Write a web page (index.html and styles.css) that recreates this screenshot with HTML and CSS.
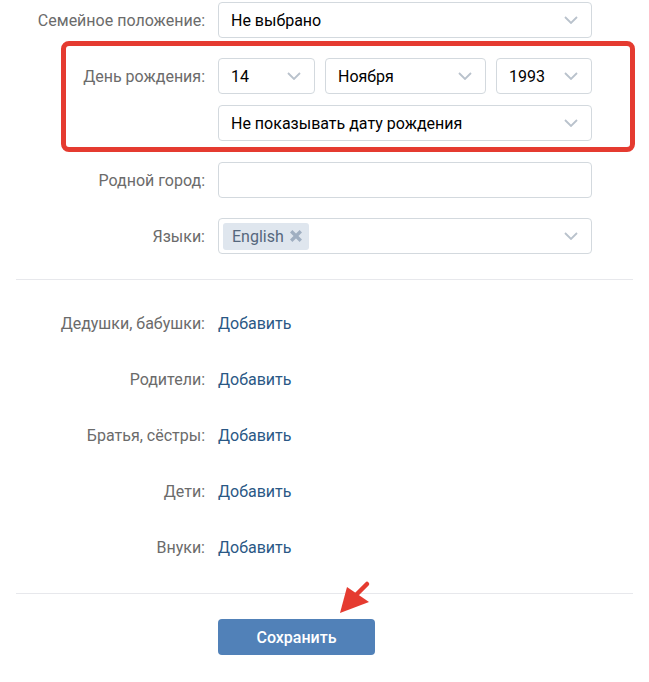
FILE: index.html
```html
<!DOCTYPE html>
<html lang="ru">
<head>
<meta charset="utf-8">
<link rel="stylesheet" href="styles.css">
</head>
<body>
<div class="page">
  <div class="row">
    <div class="label">Семейное положение:</div>
    <div class="field">
      <div class="select wide"><span>Не выбрано</span><svg class="chev" viewBox="0 0 14 8"><path d="M1 1l6 6 6-6"/></svg></div>
    </div>
  </div>

  <div class="bday">
    <div class="row tight">
      <div class="label">День рождения:</div>
      <div class="field split">
        <div class="select day"><span>14</span><svg class="chev" viewBox="0 0 14 8"><path d="M1 1l6 6 6-6"/></svg></div>
        <div class="select month"><span>Ноября</span><svg class="chev" viewBox="0 0 14 8"><path d="M1 1l6 6 6-6"/></svg></div>
        <div class="select year"><span>1993</span><svg class="chev" viewBox="0 0 14 8"><path d="M1 1l6 6 6-6"/></svg></div>
      </div>
    </div>
    <div class="row bday-last">
      <div class="label"></div>
      <div class="field">
        <div class="select wide"><span>Не показывать дату рождения</span><svg class="chev" viewBox="0 0 14 8"><path d="M1 1l6 6 6-6"/></svg></div>
      </div>
    </div>
    <div class="highlight"></div>
  </div>

  <div class="row">
    <div class="label">Родной город:</div>
    <div class="field"><div class="input"></div></div>
  </div>

  <div class="row">
    <div class="label">Языки:</div>
    <div class="field">
      <div class="select wide tags">
        <span class="tag">English<svg class="x" viewBox="0 0 10 10"><path d="M1 1l8 8M9 1l-8 8"/></svg></span>
        <svg class="chev" viewBox="0 0 14 8"><path d="M1 1l6 6 6-6"/></svg>
      </div>
    </div>
  </div>

  <div class="sep"></div>

  <div class="relatives">
    <div class="row"><div class="label">Дедушки, бабушки:</div><div class="field"><a class="link">Добавить</a></div></div>
    <div class="row"><div class="label">Родители:</div><div class="field"><a class="link">Добавить</a></div></div>
    <div class="row"><div class="label">Братья, сёстры:</div><div class="field"><a class="link">Добавить</a></div></div>
    <div class="row"><div class="label">Дети:</div><div class="field"><a class="link">Добавить</a></div></div>
    <div class="row"><div class="label">Внуки:</div><div class="field"><a class="link">Добавить</a></div></div>
  </div>

  <div class="sep sep2"></div>

  <div class="actions">
    <button class="btn">Сохранить</button>
    <svg class="arrow" viewBox="0 0 50 40"><path class="shaft" d="M37 5L24 18"/><path class="head" d="M17 8L39 23L10 34Z"/></svg>
  </div>
</div>
</body>
</html>
```

FILE: styles.css
```css
* { box-sizing: border-box; }
html, body { margin: 0; padding: 0; background: #fff; }
body {
  font-family: Roboto, "Noto Sans", Arial, sans-serif;
  font-size: 16px;
  color: #000;
  width: 649px;
  height: 682px;
  overflow: hidden;
}
.page {
  position: relative;
  padding-top: 2px;
}
.row {
  display: flex;
  align-items: center;
  min-height: 36px;
  margin-bottom: 20px;
}
.row.tight { margin-bottom: 11px; }
.label {
  width: 205px;
  flex: none;
  text-align: right;
  color: #6b6b6b;
}
.field {
  margin-left: 13px;
  width: 374px;
  flex: none;
}
.split {
  display: flex;
  gap: 10px;
}
.select, .input {
  height: 36px;
  border: 1px solid #d3d9de;
  border-radius: 4px;
  display: flex;
  align-items: center;
  padding-left: 12px;
  position: relative;
  background: #fff;
}
.select span { flex: 1; white-space: nowrap; }
.day { width: 97px; }
.month { width: 161px; }
.year { width: 96px; }
.chev {
  width: 14px;
  height: 8px;
  margin-right: 13px;
  flex: none;
  fill: none;
  stroke: #b9c2cc;
  stroke-width: 1.8;
}
.tags { padding-left: 4px; }
.tags .chev { margin-left: auto; }
.tag {
  flex: none !important;
  display: inline-flex;
  align-items: center;
  height: 27px;
  padding: 0 7px 0 9px;
  background: #dfe6ee;
  border-radius: 3px;
  color: #55677d;
}
.tag .x {
  width: 12px;
  height: 12px;
  margin-left: 6px;
  fill: none;
  stroke: #a0afc1;
  stroke-width: 2.8;
}
.bday {
  position: relative;
  display: flow-root;
}
.bday-last { margin-bottom: 21px; }
.highlight {
  position: absolute;
  left: 61px;
  right: 14px;
  top: -17px;
  bottom: 10px;
  border: 5px solid #e53b30;
  border-radius: 8px;
  pointer-events: none;
}
.sep {
  height: 1px;
  background: #e7e8ec;
  margin: 25px 16px 25px 16px;
}
.sep2 { margin-top: 28px; }
.link { color: #2a5885; text-decoration: none; }
.actions {
  position: relative;
  padding-left: 218px;
}
.btn {
  width: 157px;
  height: 36px;
  border: 0;
  border-radius: 4px;
  background: #5181b8;
  color: #fff;
  font-family: Roboto, "Noto Sans", Arial, sans-serif;
  font-size: 16px;
  font-weight: 500;
  padding: 0;
}
.arrow {
  position: absolute;
  left: 330px;
  top: -40px;
  width: 50px;
  height: 40px;
  overflow: visible;
}
.arrow .shaft { stroke: #e53b30; stroke-width: 4.5; stroke-linecap: round; fill: none; }
.arrow .head { fill: #e53b30; }
```
